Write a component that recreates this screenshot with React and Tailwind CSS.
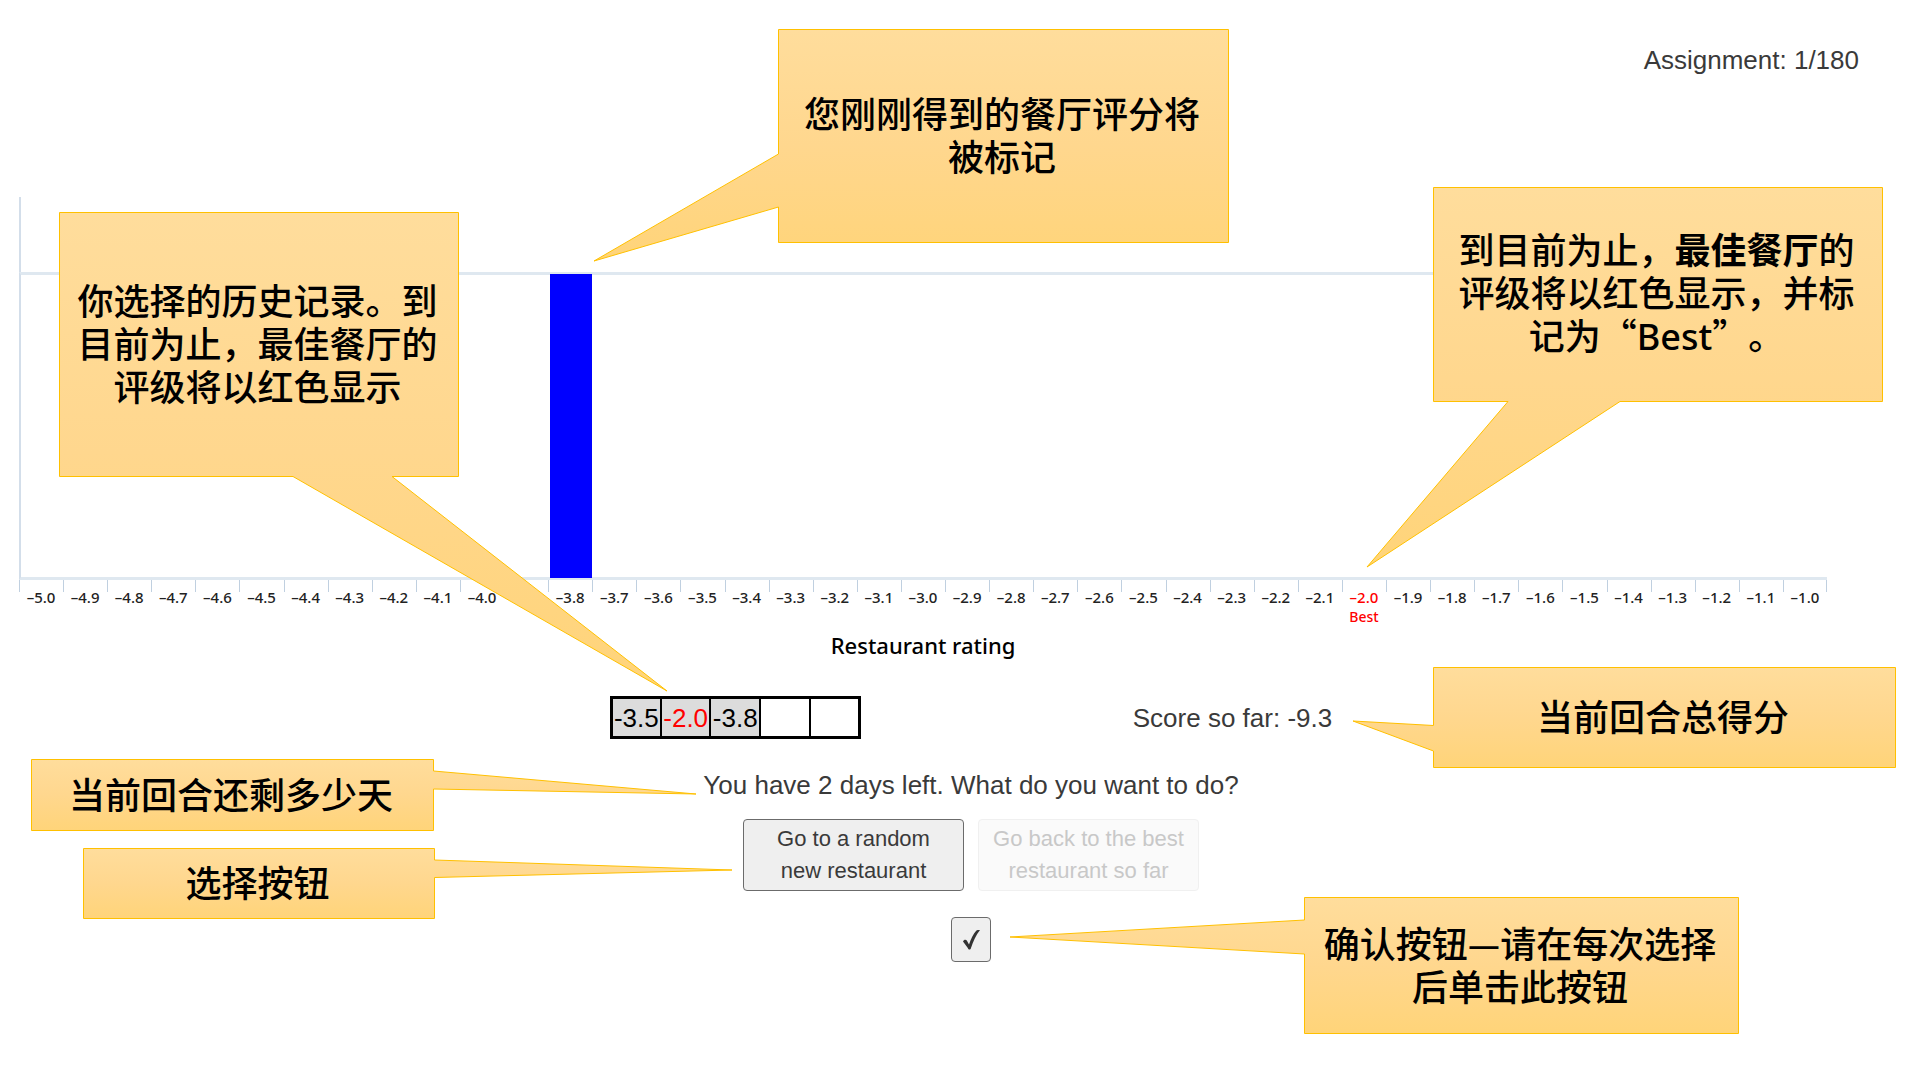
const CJK = "font-['Noto_Sans_CJK_SC',sans-serif]";

const ratings = Array.from({ length: 41 }, (_, i) => ((50 - i) / 10).toFixed(1));
const current = '3.8';
const best = '2.0';

const history = [
  { value: '-3.5' },
  { value: '-2.0', best: true },
  { value: '-3.8' },
  { value: '' },
  { value: '' },
];

/* Each callout is a box with a pointed tail; points are local to the box. */
const callouts = [
  {
    id: 'history',
    place: 'left-[59px] top-[212px] w-[400px] h-[265px]',
    points: '0.5,0.5 399.5,0.5 399.5,264.5 333,264.5 608,479 234,264.5 0.5,264.5',
    lines: ['你选择的历史记录。到', '目前为止，最佳餐厅的', '评级将以红色显示'],
  },
  {
    id: 'marked',
    place: 'left-[778px] top-[29px] w-[451px] h-[214px]',
    points: '0.5,0.5 450.5,0.5 450.5,213.5 0.5,213.5 0.5,178 -184,232 0.5,125',
    lines: ['您刚刚得到的餐厅评分将', '被标记'],
  },
  {
    id: 'best',
    place: 'left-[1433px] top-[187px] w-[450px] h-[215px]',
    points: '0.5,0.5 449.5,0.5 449.5,214.5 187,214.5 -66,380 75,214.5 0.5,214.5',
    lines: [
      <>到目前为止，<b className="font-bold">最佳餐厅</b>的</>,
      '评级将以红色显示，并标',
      <>记为“<span className="font-['Noto_Sans',sans-serif]">Best</span>”。</>,
    ],
  },
  {
    id: 'score',
    place: 'left-[1433px] top-[667px] w-[463px] h-[101px]',
    points: '0.5,0.5 462.5,0.5 462.5,100.5 0.5,100.5 0.5,84 -80,54 0.5,58.5',
    lines: ['当前回合总得分'],
  },
  {
    id: 'days',
    place: 'left-[31px] top-[759px] w-[403px] h-[72px]',
    points: '0.5,0.5 402.5,0.5 402.5,12 665,35 402.5,30 402.5,71.5 0.5,71.5',
    lines: ['当前回合还剩多少天'],
  },
  {
    id: 'choice',
    place: 'left-[83px] top-[848px] w-[352px] h-[71px]',
    points: '0.5,0.5 351.5,0.5 351.5,12 649,22 351.5,29.5 351.5,70.5 0.5,70.5',
    lines: ['选择按钮'],
  },
  {
    id: 'confirm',
    place: 'left-[1304px] top-[897px] w-[435px] h-[137px]',
    points: '0.5,0.5 434.5,0.5 434.5,136.5 0.5,136.5 0.5,57 -294,40 0.5,23',
    lines: ['确认按钮—请在每次选择', '后单击此按钮'],
  },
];

function Callout({ id, place, points, lines }) {
  return (
    <aside className={`absolute flex items-center justify-center pr-[3px] pb-1 ${place}`}>
      <svg className="absolute inset-0 size-full overflow-visible" aria-hidden="true">
        <defs>
          <linearGradient id={`fill-${id}`} x1="0" y1="0" x2="0" y2="1">
            <stop offset="0" stopColor="#ffdd9c" />
            <stop offset="0.5" stopColor="#ffd78e" />
            <stop offset="1" stopColor="#ffd479" />
          </linearGradient>
        </defs>
        <polygon points={points} fill={`url(#fill-${id})`} stroke="#ffc000" />
      </svg>
      <p className={`relative text-center text-[36px] leading-[43px] font-medium whitespace-nowrap text-black [text-spacing-trim:space-all] ${CJK}`}>
        {lines.map((line, i) => (
          <span key={i} className="block">{line}</span>
        ))}
      </p>
    </aside>
  );
}

function RatingChart() {
  return (
    <figure className="mt-[115px] mr-[93px] ml-[19px] font-['Noto_Sans',sans-serif] font-medium">
      <div className="h-[75px] border-l-2 border-[#d3deea]" />
      <div className="grid h-[308px] grid-cols-[repeat(41,minmax(0,1fr))] border-y-3 border-l-2 border-y-[#dfe8f0] border-l-[#d3deea]">
        {ratings.map((r) => (
          <div key={r} className="-my-px">
            {r === current && <div className="mr-0.5 h-full bg-[#0000ff]" />}
          </div>
        ))}
      </div>
      <div className="grid grid-cols-[repeat(41,minmax(0,1fr))]">
        {ratings.map((r) => (
          <div key={r} className="group">
            <div className="h-3 border-l border-[#c0d0e0] group-last:border-r" />
            <div className={`-mt-[5px] text-center text-[15px] leading-5 ${r === best ? 'text-[#ff0000]' : 'text-[#222]'}`}>
              –{r}
              {r === best && <div className="text-sm leading-5">Best</div>}
            </div>
          </div>
        ))}
      </div>
      <figcaption className="mt-[3px] text-center text-[22px] leading-[30px] text-black">Restaurant rating</figcaption>
    </figure>
  );
}

export default function App() {
  return (
    <main className="relative min-h-screen overflow-hidden bg-white font-['Liberation_Sans',sans-serif] text-[26px] leading-9 text-[#3a3a3a]">
      <header className="pt-[38px] pr-[61px] text-right leading-[44px]">Assignment: 1/180</header>

      <RatingChart />

      <section className="mt-9 flex flex-col items-center pl-[22px]">
        <div className="flex items-center gap-[272px]">
          <table className="w-[251px] table-fixed border-collapse border-3 border-black text-black">
            <tbody>
              <tr>
                {history.map((h, i) => (
                  <td
                    key={i}
                    className={`h-10 border-2 border-black p-0 text-center leading-9 ${h.value ? 'bg-[#dcdcdc]' : 'bg-white'} ${h.best ? 'text-[#ff0000]' : ''}`}
                  >
                    {h.value}
                  </td>
                ))}
              </tr>
            </tbody>
          </table>
          <p>Score so far: -9.3</p>
        </div>

        <p className="mt-[28px]">You have 2 days left. What do you want to do?</p>

        <div className="mt-4 flex gap-[14px]">
          <button type="button" className="h-[72px] w-[221px] rounded border border-[#6b6b6b] bg-[#efefef] text-[22px] leading-8">
            Go to a random
            <br />
            new restaurant
          </button>
          <button type="button" disabled className="h-[72px] w-[221px] rounded border border-[#f0f0f0] bg-[#fafafa] text-[22px] leading-8 text-[#c8c8c8]">
            Go back to the best
            <br />
            restaurant so far
          </button>
        </div>

        <button type="button" aria-label="Confirm" className="mt-[26px] flex h-[45px] w-10 items-center justify-center rounded border border-[#6b6b6b] bg-[#efefef]">
          <svg className="h-5 w-[17px]" viewBox="0 0 17 20" aria-hidden="true">
            <path d="M0 11.5 C0.8 9.6 2.8 9 3.8 10.6 L6 14.6 C8 8.4 10.5 3.6 13.2 0.8 C14 0 15.5 0 17 0 C13 5 10 11.5 8 18 C7.4 20 5.6 20 4.8 18 Z" fill="#333" />
          </svg>
        </button>
      </section>

      {callouts.map((c) => (
        <Callout key={c.id} {...c} />
      ))}
    </main>
  );
}
